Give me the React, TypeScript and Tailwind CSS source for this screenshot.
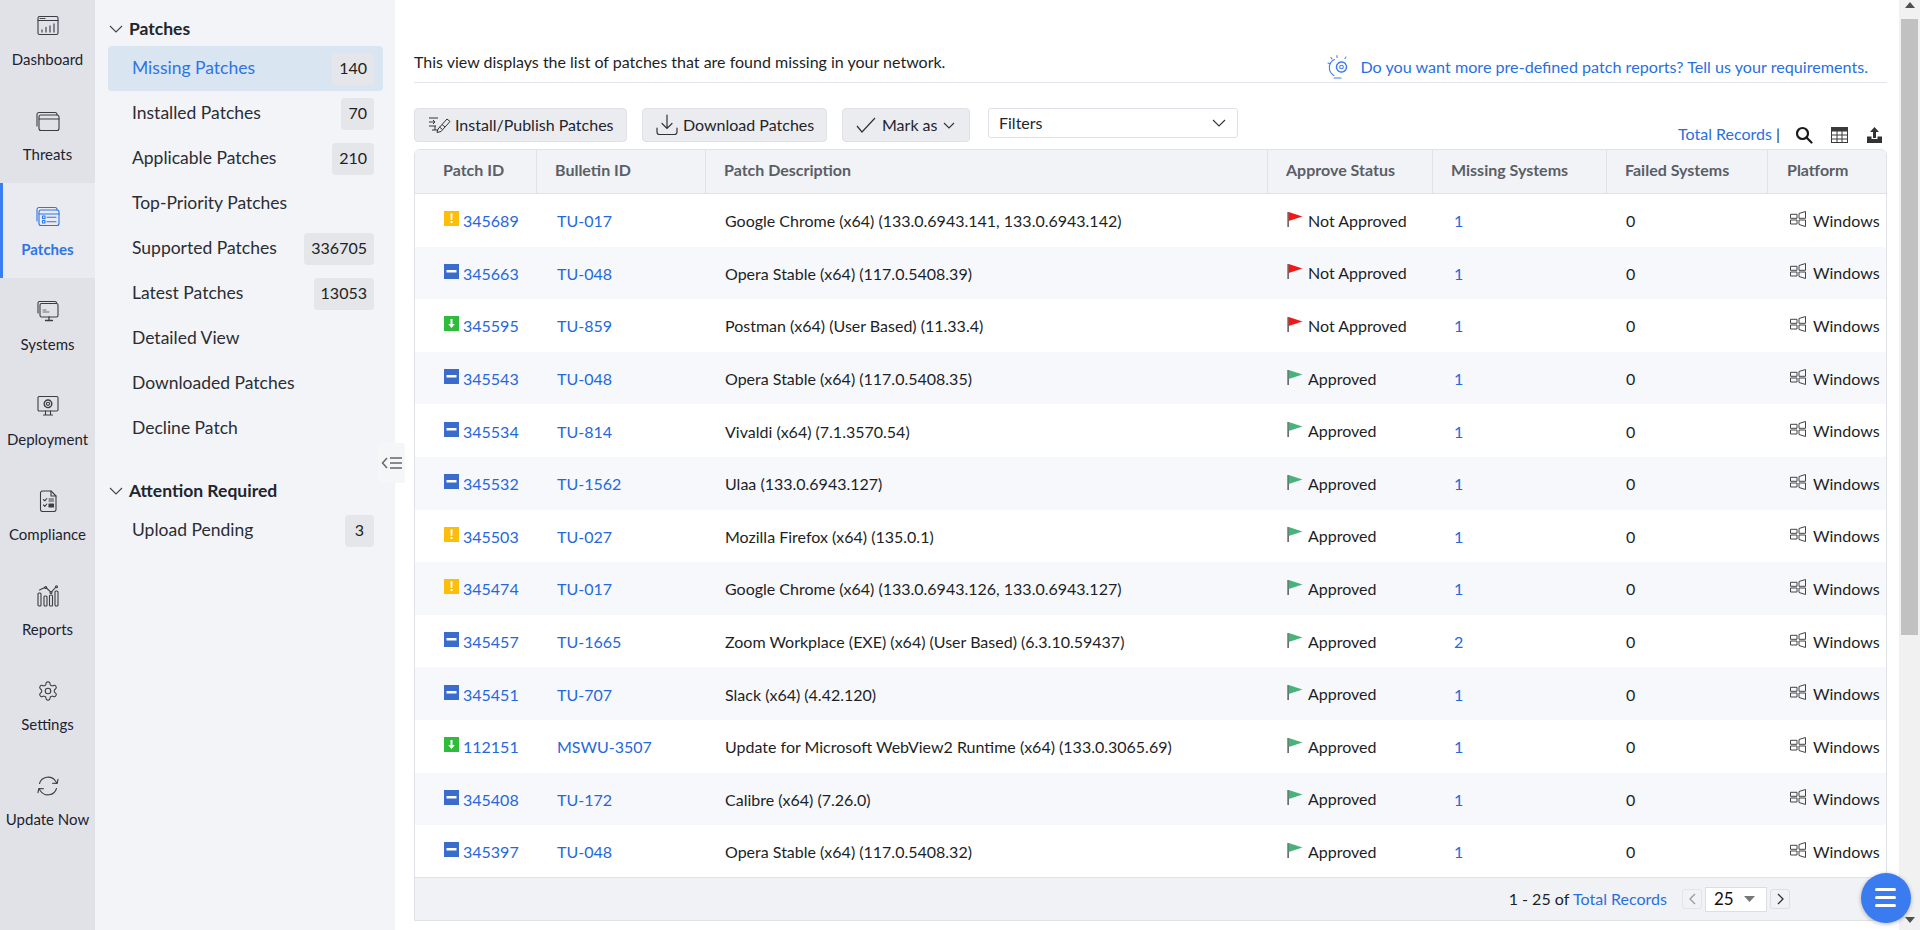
import React from "react";

const S = { fill: "none", stroke: "currentColor", strokeWidth: 1.1, strokeLinecap: "round" as const, strokeLinejoin: "round" as const };

const IconDashboard = () => (
  <svg width="22" height="22" viewBox="0 0 22 22" {...S}>
    <rect x="1" y="1.5" width="20" height="18" rx="1.5" />
    <path d="M1 5.500h20" />
    <path d="M3 3.500h1M5 3.500h1M7 3.500h1" />
    <path d="M5 17v-2M9 17v-4.500M13 17v-6M17 17V9" strokeWidth="1.600" stroke="#6b6f76" />
  </svg>
);
const IconThreats = () => (
  <svg width="24" height="22" viewBox="0 0 24 22" {...S}>
    <path d="M1 16V4.500A2 2 0 0 1 3 2.500h16a2 2 0 0 1 2 2V5" />
    <rect x="3" y="5" width="20" height="15.500" rx="2" />
    <path d="M3 9h20" />
  </svg>
);
const IconPatches = () => (
  <svg width="24" height="22" viewBox="0 0 24 22" {...S}>
    <path d="M1 16V4.500A2 2 0 0 1 3 2.500h16a2 2 0 0 1 2 2V5" />
    <rect x="3" y="5" width="20" height="15.500" rx="2" />
    <path d="M3 9h20" />
    <rect x="6.500" y="11" width="2.500" height="2.500" />
    <rect x="6.500" y="15.500" width="2.500" height="2.500" />
    <path d="M11 12.200h9M11 16.800h9" />
  </svg>
);
const IconSystems = () => (
  <svg width="22" height="22" viewBox="0 0 22 22" {...S}>
    <path d="M1 13V3a1.500 1.500 0 0 1 1.500-1.500H18A1.500 1.500 0 0 1 19.500 3" />
    <rect x="3" y="3.500" width="18" height="13.500" rx="1.500" />
    <path d="M6 10h3M6 12h6" strokeWidth="1" stroke="#6b6f76" />
    <path d="M12 17v3M8.500 20.500h7" strokeWidth="1.300" />
  </svg>
);
const IconDeployment = () => (
  <svg width="22" height="22" viewBox="0 0 22 22" {...S}>
    <rect x="1" y="1.500" width="20" height="14.500" rx="1.200" />
    <path d="M8.500 16v3.500M13.500 16v3.500M6.500 20h9" />
    <circle cx="11" cy="8.800" r="1.600" />
    <circle cx="11" cy="8.800" r="3.800" strokeDasharray="2 1" strokeWidth="1.400" />
  </svg>
);
const IconCompliance = () => (
  <svg width="22" height="22" viewBox="0 0 22 22" {...S}>
    <path d="M3.500 3a2 2 0 0 1 2-2H14l5 5v13.500a2 2 0 0 1-2 2H5.500a2 2 0 0 1-2-2z" />
    <path d="M14 1v5h5" />
    <path d="M6.500 9.500l1.300 1.300 2-2.300M6.500 15l1.300 1.300 2-2.300" />
    <path d="M12 9h4.500M12 11h4.500" />
    <rect x="12" y="14" width="4.500" height="3" fill="currentColor" />
  </svg>
);
const IconReports = () => (
  <svg width="22" height="22" viewBox="0 0 22 22" {...S}>
    <rect x="1" y="8" width="3" height="13" rx="1" />
    <rect x="7" y="11" width="3" height="10" rx="1" />
    <rect x="12.500" y="10" width="3" height="11" rx="1" />
    <rect x="18" y="6" width="3" height="15" rx="1" />
    <path d="M2.500 5L7.800 2.500M9.500 3l3.800 3.700M14.800 6.700L18.500 2.500" />
    <circle cx="8.700" cy="2.500" r="1" />
    <circle cx="14" cy="7.500" r="1" />
    <circle cx="19.500" cy="1.800" r="1" />
  </svg>
);
const IconSettings = () => (
  <svg width="22" height="22" viewBox="0 0 24 24" fill="none" stroke="currentColor" strokeWidth="1.200" strokeLinecap="round" strokeLinejoin="round">
    <path d="M12.220 2h-.44a2 2 0 0 0-2 2v.18a2 2 0 0 1-1 1.730l-.43.250a2 2 0 0 1-2 0l-.15-.08a2 2 0 0 0-2.730.730l-.220.380a2 2 0 0 0 .730 2.730l.150.100a2 2 0 0 1 1 1.720v.510a2 2 0 0 1-1 1.740l-.150.090a2 2 0 0 0-.730 2.730l.220.380a2 2 0 0 0 2.730.730l.150-.080a2 2 0 0 1 2 0l.430.250a2 2 0 0 1 1 1.730V20a2 2 0 0 0 2 2h.440a2 2 0 0 0 2-2v-.180a2 2 0 0 1 1-1.730l.430-.250a2 2 0 0 1 2 0l.150.080a2 2 0 0 0 2.730-.730l.220-.390a2 2 0 0 0-.730-2.730l-.150-.080a2 2 0 0 1-1-1.740v-.500a2 2 0 0 1 1-1.740l.150-.090a2 2 0 0 0 .730-2.730l-.220-.380a2 2 0 0 0-2.730-.730l-.150.080a2 2 0 0 1-2 0l-.430-.250a2 2 0 0 1-1-1.730V4a2 2 0 0 0-2-2z" />
    <circle cx="12" cy="12" r="3" />
  </svg>
);
const IconUpdate = () => (
  <svg width="22" height="22" viewBox="0 0 22 22" {...S}>
    <path d="M2.500 8.500A9 9 0 0 1 18.500 6l1.300 2" />
    <path d="M15.500 8.200l4.700.2.800-4" />
    <path d="M19.500 13.500A9 9 0 0 1 3.500 16l-1.300-2" />
    <path d="M6.500 13.800l-4.700-.2-.8 4" />
  </svg>
);

const nav = [
  { label: "Dashboard", Icon: IconDashboard },
  { label: "Threats", Icon: IconThreats },
  { label: "Patches", Icon: IconPatches, active: true },
  { label: "Systems", Icon: IconSystems },
  { label: "Deployment", Icon: IconDeployment },
  { label: "Compliance", Icon: IconCompliance },
  { label: "Reports", Icon: IconReports },
  { label: "Settings", Icon: IconSettings },
  { label: "Update Now", Icon: IconUpdate },
];

const menu: { label: string; count?: string; active?: boolean }[] = [
  { label: "Missing Patches", count: "140", active: true },
  { label: "Installed Patches", count: "70" },
  { label: "Applicable Patches", count: "210" },
  { label: "Top-Priority Patches" },
  { label: "Supported Patches", count: "336705" },
  { label: "Latest Patches", count: "13053" },
  { label: "Detailed View" },
  { label: "Downloaded Patches" },
  { label: "Decline Patch" },
];

type Sev = "y" | "b" | "g";
const rows: [Sev, string, string, string, boolean, string][] = [
  ["y", "345689", "TU-017", "Google Chrome (x64) (133.0.6943.141, 133.0.6943.142)", false, "1"],
  ["b", "345663", "TU-048", "Opera Stable (x64) (117.0.5408.39)", false, "1"],
  ["g", "345595", "TU-859", "Postman (x64) (User Based) (11.33.4)", false, "1"],
  ["b", "345543", "TU-048", "Opera Stable (x64) (117.0.5408.35)", true, "1"],
  ["b", "345534", "TU-814", "Vivaldi (x64) (7.1.3570.54)", true, "1"],
  ["b", "345532", "TU-1562", "Ulaa (133.0.6943.127)", true, "1"],
  ["y", "345503", "TU-027", "Mozilla Firefox (x64) (135.0.1)", true, "1"],
  ["y", "345474", "TU-017", "Google Chrome (x64) (133.0.6943.126, 133.0.6943.127)", true, "1"],
  ["b", "345457", "TU-1665", "Zoom Workplace (EXE) (x64) (User Based) (6.3.10.59437)", true, "2"],
  ["b", "345451", "TU-707", "Slack (x64) (4.42.120)", true, "1"],
  ["g", "112151", "MSWU-3507", "Update for Microsoft WebView2 Runtime (x64) (133.0.3065.69)", true, "1"],
  ["b", "345408", "TU-172", "Calibre (x64) (7.26.0)", true, "1"],
  ["b", "345397", "TU-048", "Opera Stable (x64) (117.0.5408.32)", true, "1"],
];

const SevIcon = ({ s }: { s: Sev }) => (
  <svg width="15" height="15" viewBox="0 0 15 15" className="shrink-0">
    {s === "y" && (
      <>
        <rect width="15" height="15" fill="#fdbe0a" />
        <path d="M6.400 2.500h2.200l-.3 6.500H6.700z" fill="#fff" />
        <rect x="6.500" y="10" width="2" height="2" fill="#fff" />
      </>
    )}
    {s === "b" && (
      <>
        <rect width="15" height="15" fill="#396ccd" />
        <rect x="2.500" y="6" width="10" height="2.500" fill="#fff" />
      </>
    )}
    {s === "g" && (
      <>
        <rect width="15" height="15" fill="#2fbb3c" />
        <path d="M6.500 3h2v5h2.300l-3.300 4-3.300-4h2.300z" fill="#fff" />
      </>
    )}
  </svg>
);

const Flag = ({ ok }: { ok: boolean }) => (
  <svg width="16" height="16" viewBox="0 0 16 16" className="shrink-0">
    <rect x="0.500" y="1" width="1.200" height="15" fill="#333" />
    <path d="M1.700 1L15.500 5.500 1.700 10z" fill={ok ? "#47b37b" : "#f01818"} />
  </svg>
);

const WinIcon = () => (
  <svg width="16" height="16" viewBox="0 0 16 16" fill="none" stroke="#444" strokeWidth="1" className="shrink-0">
    <path d="M.500 3.300h6.500v4H.500zM9 2.500L15.500.500v6.800H9zM.500 9h6.500v4H.500zM9 9h6.500v6.500L9 13.500z" />
  </svg>
);

const cols = "grid grid-cols-[122px_169px_562px_165px_174px_161px_1fr]";
const headers = ["Patch ID", "Bulletin ID", "Patch Description", "Approve Status", "Missing Systems", "Failed Systems", "Platform"];
const headerPad = ["pl-[28px]", "pl-[18px]", "pl-[18px]", "pl-[18px]", "pl-[18px]", "pl-[18px]", "pl-[19px]"];

export default function App() {
  return (
    <div className="relative flex h-[930px] w-[1920px] overflow-hidden bg-white font-['Lato',sans-serif] text-[16px] text-[#1c1f26]">
      <aside className="flex h-full w-[95px] shrink-0 flex-col bg-[#e1e2e7]">
        {nav.map(({ label, Icon, active }, i) => (
          <div
            key={label}
            className={
              (i === 0 ? "h-[88px] pt-[14px] " : "h-[95px] pt-[21px] ") +
              "flex flex-col items-center " +
              (active ? "border-l-[3px] border-[#3a7ef2] bg-[#e9ebf0] pr-[3px] text-[#2f74e6]" : "text-[#3a3d44]")
            }
          >
            <div className="flex h-[24px] items-center justify-center">
              <Icon />
            </div>
            <div className={"mt-[10px] text-[15px] leading-[22px] " + (active ? "font-bold text-[#2f74e6]" : "text-[#1c2230]")}>{label}</div>
          </div>
        ))}
      </aside>

      <nav className="relative h-full w-[300px] shrink-0 bg-[#f2f4f8] pl-[13px] pr-[12px] pt-[13px]">
        <div className="flex h-[32px] items-center text-[17.5px] font-bold text-[#22252b]">
          <svg width="14" height="8" viewBox="0 0 14 8" fill="none" stroke="#444" strokeWidth="1.100" className="ml-px mr-[6px]">
            <path d="M1 1l6 6 6-6" />
          </svg>
          Patches
        </div>
        <div className="mt-px">
          {menu.map((m) => (
            <div key={m.label} className={"flex h-[45px] items-center justify-between rounded-[4px] pl-[24px] pr-[9px] text-[17.5px] " + (m.active ? "bg-[#d9e5f1] text-[#2f74e6]" : "text-[#2a2d33]")}>
              <span>{m.label}</span>
              {m.count && <span className="flex h-[32px] items-center rounded-[4px] bg-[#e4e6ea] px-[7px] pb-[2px] text-[16px] text-[#222]">{m.count}</span>}
            </div>
          ))}
        </div>
        <div className="mt-[24px] flex h-[32px] items-center text-[17.5px] font-bold text-[#22252b]">
          <svg width="14" height="8" viewBox="0 0 14 8" fill="none" stroke="#444" strokeWidth="1.100" className="ml-px mr-[6px]">
            <path d="M1 1l6 6 6-6" />
          </svg>
          Attention Required
        </div>
        <div className="mt-px flex h-[45px] items-center justify-between pl-[24px] pr-[9px] text-[17.5px] text-[#2a2d33]">
          <span>Upload Pending</span>
          <span className="flex h-[32px] items-center rounded-[4px] bg-[#e4e6ea] px-[10px] pb-[2px] text-[16px] text-[#222]">3</span>
        </div>
        <div className="absolute left-[283px] top-[443px] flex h-[40px] w-[27px] items-center justify-center rounded-[3px] bg-[#f5f6f8]">
          <svg width="22" height="14" viewBox="0 0 22 14" fill="none" stroke="#666" strokeWidth="1.500">
            <path d="M6 2L1.500 7 6 12M9 2h12M9 7h12M9 12h12" />
          </svg>
        </div>
      </nav>

      <main className="min-w-0 flex-1 pl-[19px] pr-[12px]">
        <div className="flex h-[83px] items-start justify-between border-b border-[#e3e5ea]">
          <div className="mt-[52px] text-[16px] leading-[20px]">This view displays the list of patches that are found missing in your network.</div>
          <div className="mt-[54px] mr-[19px] flex items-center text-[#2a6fdf]">
            <svg width="26" height="26" viewBox="0 0 26 26" fill="none" stroke="#3a7ef2" strokeWidth="1.100" strokeLinecap="round" className="mr-[8px]">
              <path d="M8 21.500A9 9 0 0 1 8.500 5.500" />
              <path d="M8 24h7" />
              <circle cx="15.500" cy="13" r="1.800" />
              <circle cx="15.500" cy="13" r="5" strokeDasharray="2.200 1" strokeWidth="1.500" />
              <path d="M11 1.500v2M5 3.500l1 1.500M20 3l-1 1.500M2 9l1.500.5" />
            </svg>
            <span className="text-[16.15px] leading-[20px]">Do you want more pre-defined patch reports? Tell us your requirements.</span>
          </div>
        </div>

        <div className="mt-[25px] flex h-[34px] items-start">
          <button className="flex h-[34px] w-[213px] items-center rounded-[4px] border border-[#dfe1e6] bg-[#ebecf0] pl-[13px] text-[16px] text-[#22252b]">
            <svg width="24" height="20" viewBox="0 0 24 20" fill="none" stroke="#333" strokeWidth="1" className="mr-[3px]">
              <path d="M1 3h9M1 7h6l-2-2M5 9l2-2M1 11h7M4 15h6M7 11v4" />
              <path d="M10 14l9-10 3 2.500-9 10-4 1z" />
              <path d="M11.500 12l3 2.500M14 9.500l3 2.500" />
            </svg>
            Install/Publish Patches
          </button>
          <button className="ml-[15px] flex h-[34px] w-[185px] items-center rounded-[4px] border border-[#dfe1e6] bg-[#ebecf0] pl-[13px] text-[16px] text-[#22252b]">
            <svg width="22" height="22" viewBox="0 0 22 22" fill="none" stroke="#333" strokeWidth="1.200" strokeLinecap="round" className="mr-[5px]">
              <path d="M11 1v13M6 9.500l5 5 5-5" />
              <path d="M1 14v4a2.500 2.500 0 0 0 2.500 2.500h15A2.500 2.500 0 0 0 21 18v-4" />
            </svg>
            Download Patches
          </button>
          <button className="ml-[15px] flex h-[34px] w-[128px] items-center rounded-[4px] border border-[#dfe1e6] bg-[#ebecf0] pl-[13px] text-[16px] text-[#22252b]">
            <svg width="20" height="16" viewBox="0 0 20 16" fill="none" stroke="#333" strokeWidth="1.200" className="mr-[6px]">
              <path d="M1 9l5 6L19 1" />
            </svg>
            Mark as
            <svg width="12" height="7" viewBox="0 0 12 7" fill="none" stroke="#333" strokeWidth="1.100" className="ml-[5px]">
              <path d="M1 1l5 5 5-5" />
            </svg>
          </button>
          <div className="ml-[18px] flex h-[30px] w-[250px] items-center justify-between rounded-[3px] border border-[#dfe1e6] bg-white pl-[10px] pr-[11px] text-[16px] text-[#22252b]">
            Filters
            <svg width="14" height="8" viewBox="0 0 14 8" fill="none" stroke="#333" strokeWidth="1.100">
              <path d="M1 1l6 6 6-6" />
            </svg>
          </div>
          <div className="ml-auto mt-[16px] flex items-center">
            <span className="-mt-[2px] text-[16px] text-[#2a6fdf]">Total Records</span>
            <span className="-mt-[2px] ml-[4px] text-[#333]">|</span>
            <svg width="18" height="18" viewBox="0 0 18 18" fill="none" stroke="#1a1a1a" strokeWidth="2.200" className="ml-[15px]">
              <circle cx="7.500" cy="7.500" r="5.500" />
              <path d="M11.500 11.500L16.500 16.500" strokeLinecap="round" />
            </svg>
            <svg width="17" height="16" viewBox="0 0 17 16" className="ml-[18px]" fill="none" stroke="#3a3a3a" strokeWidth="1">
              <rect x="0.500" y="0.500" width="16" height="15" />
              <rect x="0.500" y="0.500" width="16" height="3.500" fill="#3a3a3a" />
              <path d="M0.500 8h16M.500 12h16M6 4v11.500M11 4v11.500" />
            </svg>
            <svg width="17" height="16" viewBox="0 0 17 16" className="ml-[18px] mr-[4px]" fill="#333">
              <path d="M8.500 0L13 5h-3v6H7V5H4z" />
              <path d="M1 9.500h4.500V12h6V9.500H16V16H1z" />
            </svg>
          </div>
        </div>

        <div className="mt-[7px] h-[772px] overflow-hidden rounded-t-[6px] border border-[#e0e2e8]">
          <div className={cols + " h-[44px] border-b border-[#e0e2e8] bg-[#f1f3f7] text-[16px] font-bold text-[#5a5e66]"}>
            {headers.map((h, i) => (
              <div key={h} className={"flex items-center pb-[4px] " + headerPad[i] + (i < 6 ? " border-r border-[#e0e2e8]" : "")}>
                {h}
              </div>
            ))}
          </div>
          <div className="h-[683px] overflow-hidden">
            {rows.map((r, i) => (
              <div key={i} className={cols + " h-[52.6px] items-center text-[16px] " + (i % 2 ? "bg-[#f7f8fc]" : "bg-white")}>
                <div className="flex items-center pl-[29px]">
                  <span className="-mt-[3px]"><SevIcon s={r[0]} /></span>
                  <span className="ml-[4px] mt-[2px] text-[#2468dc]">{r[1]}</span>
                </div>
                <div className="mt-[2px] pl-[20px] text-[#2468dc]">{r[2]}</div>
                <div className="mt-[2px] pl-[19px]">{r[3]}</div>
                <div className="flex items-center pl-[19px]">
                  <span className="-mt-[3px]"><Flag ok={r[4]} /></span>
                  <span className="ml-[5px] mt-[1px]">{r[4] ? "Approved" : "Not Approved"}</span>
                </div>
                <div className="mt-[2px] pl-[21px] text-[#2468dc]">{r[5]}</div>
                <div className="mt-[2px] pl-[19px]">0</div>
                <div className="flex items-center pl-[22px]">
                  <span className="-mt-[3px]"><WinIcon /></span>
                  <span className="ml-[7px] mt-[1px]">Windows</span>
                </div>
              </div>
            ))}
          </div>
          <div className="flex h-[44px] items-center justify-end border-t border-[#e0e2e8] bg-[#f1f2f6] pb-[1px] pr-[96px] text-[16px]">
            <span>1 - 25 of&nbsp;</span>
            <span className="text-[#2a6fdf]">Total Records</span>
            <span className="ml-[15px] flex h-[20px] w-[20px] items-center justify-center rounded-[3px] border border-[#e2e4e8]">
              <svg width="7" height="12" viewBox="0 0 7 12" fill="none" stroke="#999" strokeWidth="1.300"><path d="M6 1L1 6l5 5" /></svg>
            </span>
            <span className="ml-[3px] flex h-[25px] w-[62px] items-center border border-[#dcdee3] bg-white pl-[8px] text-[17px] text-[#111]">
              25
              <svg width="11" height="6" viewBox="0 0 11 6" className="ml-[10px]" fill="#777"><path d="M0 0h11L5.500 6z" /></svg>
            </span>
            <span className="ml-[3px] flex h-[20px] w-[20px] items-center justify-center rounded-[3px] border border-[#dcdee3]">
              <svg width="7" height="12" viewBox="0 0 7 12" fill="none" stroke="#333" strokeWidth="1.300"><path d="M1 1l5 5-5 5" /></svg>
            </span>
          </div>
        </div>
      </main>

      <div className="flex h-full w-[21px] shrink-0 flex-col items-center justify-between bg-[#f1f1f1] pl-[2px] pr-[2px]">
        <div className="flex w-full flex-col items-center">
          <svg width="10" height="6" viewBox="0 0 10 6" className="mt-[2px]" fill="#505050"><path d="M5 0l5 6H0z" /></svg>
          <div className="mt-[11px] h-[616px] w-[17px] bg-[#c1c1c1]" />
        </div>
        <svg width="10" height="6" viewBox="0 0 10 6" className="mb-[7px]" fill="#505050"><path d="M0 0h10L5 6z" /></svg>
      </div>

      <div className="absolute left-[1861px] top-[873px] flex h-[50px] w-[50px] items-center justify-center rounded-full bg-[#3a7bf0] shadow-[0_1px_4px_rgba(0,0,0,0.3)]">
        <svg width="22" height="20" viewBox="0 0 22 20" fill="#fff">
          <rect y="0" width="21" height="3" rx="1.500" />
          <rect y="8" width="21" height="3" rx="1.500" />
          <rect y="16" width="21" height="3" rx="1.500" />
        </svg>
      </div>
    </div>
  );
}
